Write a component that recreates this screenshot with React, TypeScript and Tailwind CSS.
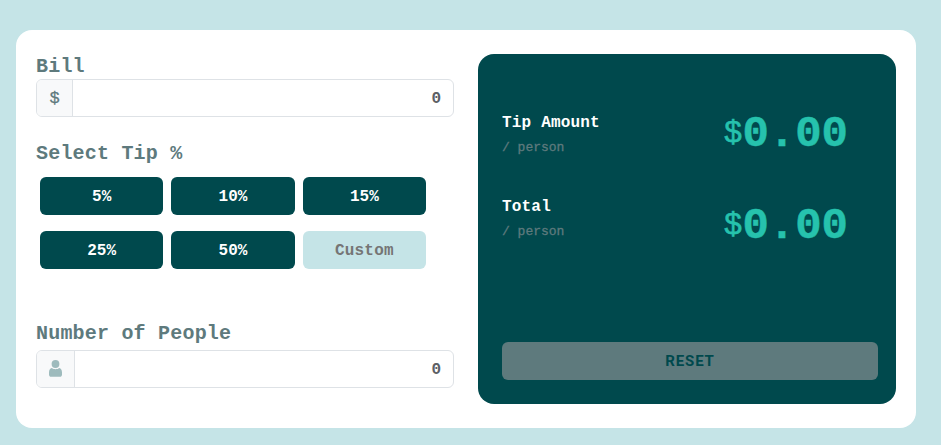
import React from 'react';

const tips = ['5%', '10%', '15%', '25%', '50%'];

function Field({ label, icon, iconWidth, gap }: { label: string; icon: React.ReactNode; iconWidth: string; gap: string }) {
  return (
    <div>
      <label className={`block whitespace-pre text-[20px] leading-[26px] tracking-[0.2px] font-bold text-[#5e7a7d] ${gap}`}>{label}</label>
      <div className="flex h-[38px] overflow-hidden rounded-md border border-[#dee2e6] bg-white">
        <span className={`flex items-center justify-center border-r border-[#dee2e6] bg-[#f8f9fa] text-[#5e7a7d] ${iconWidth}`}>{icon}</span>
        <input className="min-w-0 flex-1 bg-transparent pr-3 pt-[2px] text-right text-[16px] font-bold text-[#5c6065] outline-none" defaultValue="0" />
      </div>
    </div>
  );
}

function Amount({ title, shift }: { title: string; shift: string }) {
  return (
    <div className="flex h-[84px] items-start justify-between">
      <div className="pt-[7px]">
        <div className="text-[16px] leading-6 tracking-[0.18px] font-bold text-white">{title}</div>
        <div className="mt-px text-[13px] leading-6 text-[#5e7a7d] [-webkit-text-stroke:0.3px_#5e7a7d]">/ person</div>
      </div>
      <div className={`flex items-center pr-[30px] text-[#26c2ad] ${shift}`}>
        <span className="text-[31px] leading-[56px] [-webkit-text-stroke:0.6px_#26c2ad]">$</span>
        <span className="text-[44px] leading-[56px] font-bold [-webkit-text-stroke:0.5px_#26c2ad]">0.00</span>
      </div>
    </div>
  );
}

export default function App() {
  return (
    <main className="h-[445px] bg-[#c5e4e7] px-4 pt-[29.5px] font-['Liberation_Mono',monospace]">
      <section className="flex h-[398px] w-[900px] rounded-2xl bg-white pl-5 pt-6">
        <div className="w-[418px]">
          <Field label="Bill" gap="-mb-px" iconWidth="w-[36px]" icon={<span className="pt-[2px] text-[17px] [-webkit-text-stroke:0.3px_#5e7a7d]">$</span>} />
          <h2 className="mt-6 text-[20px] leading-[26px] tracking-[0.2px] font-bold text-[#5e7a7d]">Select Tip %</h2>
          <div className="ml-1 mt-[10px] grid w-[386px] grid-cols-3 gap-x-2 gap-y-4">
            {tips.map((tip) => (
              <button key={tip} className="h-[38px] rounded-md bg-[#00494d] pt-[2px] text-[16px] font-bold text-white">{tip}</button>
            ))}
            <button className="h-[38px] rounded-md bg-[#c5e4e7] pt-[2px] text-[16px] tracking-[0.2px] font-bold text-[#757575]">Custom</button>
          </div>
          <div className="mt-[52px]">
            <Field
              label="Number of People"
              gap="mb-[3px]"
              iconWidth="w-[38px]"
              icon={
                <svg width="13" height="17" viewBox="0 0 13 17" fill="#9ebbbd">
                  <circle cx="6.5" cy="4" r="3.9" />
                  <path d="M2.8 8C4.8 9.6 8.2 9.6 10.2 8C12 8.4 13 10 13 12.4V14.5C13 16 12.1 16.8 10.9 16.8H2.1C.9 16.8 0 16 0 14.5V12.4C0 10 1 8.4 2.8 8Z" />
                </svg>
              }
            />
          </div>
        </div>
        <div className="ml-6 flex h-[350px] w-[418px] flex-col rounded-2xl bg-[#00494d] pb-6 pl-6 pr-[18px] pt-[50px]">
          <Amount title="Tip Amount" shift="pt-[2px]" />
          <Amount title="Total" shift="pt-[10px]" />
          <button className="mt-auto h-[38px] rounded-md bg-[#5e7a7d] pt-[2px] font-['Roboto',sans-serif] text-[15px] tracking-[0.9px] font-bold text-[#00494d]">RESET</button>
        </div>
      </section>
    </main>
  );
}
